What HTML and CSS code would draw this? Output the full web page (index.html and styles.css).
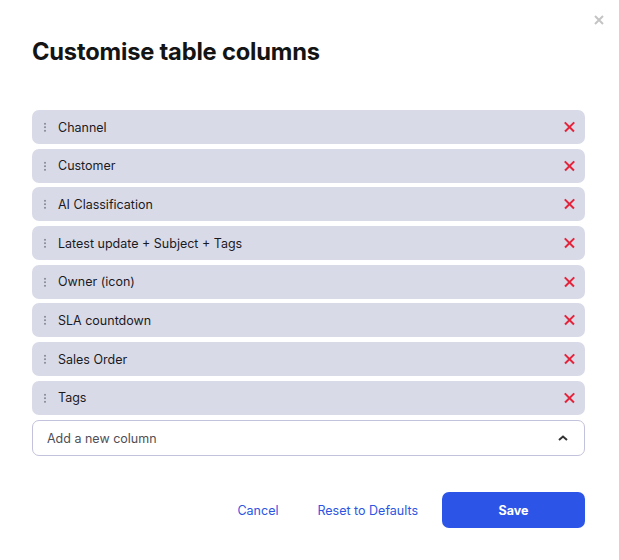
FILE: index.html
```html
<!DOCTYPE html>
<html lang="en">
<head>
    <meta charset="UTF-8">
    <meta name="viewport" content="width=device-width, initial-scale=1.0">
    <title>Customise table columns</title>
    <link rel="stylesheet" href="styles.css">
</head>
<body>
    <div class="modal">
        <button class="close" aria-label="Close">
            <svg width="10" height="10" viewBox="0 0 10 10"><path d="M1 1L9 9M9 1L1 9" stroke="#c4c4c4" stroke-width="2"/></svg>
        </button>
        <h1 class="title">Customise table columns</h1>
        <ul class="columns">
            <li class="column"><span class="handle"></span><span class="label">Channel</span><span class="remove"></span></li>
            <li class="column"><span class="handle"></span><span class="label">Customer</span><span class="remove"></span></li>
            <li class="column"><span class="handle"></span><span class="label">AI Classification</span><span class="remove"></span></li>
            <li class="column"><span class="handle"></span><span class="label">Latest update + Subject + Tags</span><span class="remove"></span></li>
            <li class="column"><span class="handle"></span><span class="label">Owner (icon)</span><span class="remove"></span></li>
            <li class="column"><span class="handle"></span><span class="label">SLA countdown</span><span class="remove"></span></li>
            <li class="column"><span class="handle"></span><span class="label">Sales Order</span><span class="remove"></span></li>
            <li class="column"><span class="handle"></span><span class="label">Tags</span><span class="remove"></span></li>
        </ul>
        <div class="add-column">
            <span class="placeholder">Add a new column</span>
            <svg class="chevron" width="10" height="6" viewBox="0 0 10 6"><path d="M1 5L5 1.5L9 5" fill="none" stroke="#333" stroke-width="2"/></svg>
        </div>
        <div class="actions">
            <button class="link">Cancel</button>
            <button class="link">Reset to Defaults</button>
            <button class="save">Save</button>
        </div>
    </div>
</body>
</html>
```

FILE: styles.css
```css
body {
    margin: 0;
    background: white;
    font-family: Inter, "Noto Sans", sans-serif;
    color: #1b1b1f;
}
.modal {
    position: relative;
    width: 619px;
    height: 560px;
    padding: 38px 34px 0 32px;
    box-sizing: border-box;
}
.close {
    position: absolute;
    top: 15px;
    right: 15px;
    width: 10px;
    height: 10px;
    padding: 0;
    border: none;
    background: none;
    cursor: pointer;
    display: flex;
}
.title {
    margin: 0;
    font-size: 23.7px;
    font-weight: 700;
    letter-spacing: -0.2px;
    line-height: 28px;
    color: #141414;
}
.columns {
    list-style: none;
    margin: 44px 0 0;
    padding: 0;
    display: flex;
    flex-direction: column;
    gap: 4.7px;
}
.column {
    display: flex;
    align-items: center;
    height: 34px;
    background-color: #d9dae8;
    border-radius: 7px;
    padding: 0 10px 0 12px;
    font-size: 12.5px;
}
.handle {
    width: 2px;
    height: 10px;
    margin-right: 12px;
    background-image: radial-gradient(circle, #8f90a0 0.9px, transparent 1.1px);
    background-size: 2px 3.5px;
}
.label {
    flex: 1;
}
.remove {
    position: relative;
    width: 11px;
    height: 11px;
}
.remove::before,
.remove::after {
    content: "";
    position: absolute;
    left: -1px;
    top: 4.5px;
    width: 13px;
    height: 1.6px;
    background: #e3243b;
    transform: rotate(45deg);
}
.remove::after {
    transform: rotate(-45deg);
}
.add-column {
    display: flex;
    align-items: center;
    justify-content: space-between;
    height: 36px;
    margin-top: 5.3px;
    border: 1px solid #c3c2dc;
    border-radius: 7px;
    padding: 0 16px 0 14px;
    box-sizing: border-box;
    font-size: 12.5px;
    color: #4f4f55;
}
.actions {
    display: flex;
    justify-content: flex-end;
    align-items: center;
    margin-top: 36px;
}
.link {
    border: none;
    background: none;
    color: #2c55e2;
    font-family: inherit;
    font-size: 12.5px;
    padding: 0;
    margin-right: 39px;
    cursor: pointer;
}
.link + .link {
    margin-right: 24px;
}
.save {
    width: 143px;
    height: 36px;
    border: none;
    border-radius: 7px;
    background-color: #2c55e8;
    color: white;
    font-family: inherit;
    font-size: 12.5px;
    font-weight: 700;
    cursor: pointer;
}
```
